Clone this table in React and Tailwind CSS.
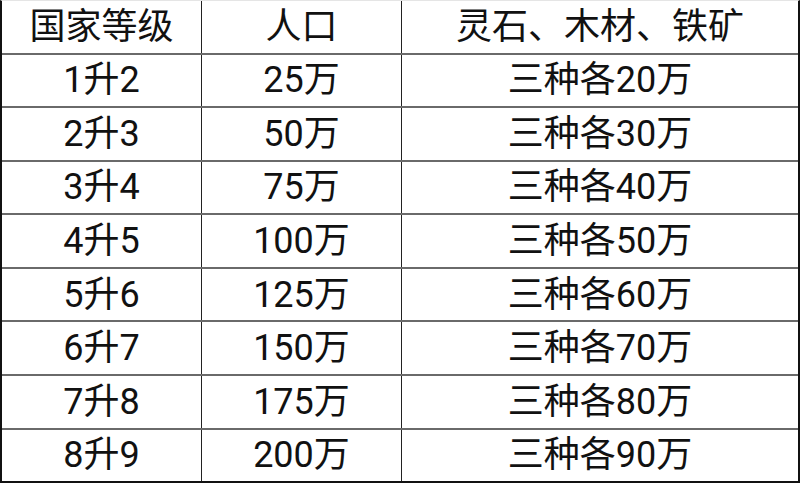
import React from "react";

const rows = [
  ["1升2", "25万", "三种各20万"],
  ["2升3", "50万", "三种各30万"],
  ["3升4", "75万", "三种各40万"],
  ["4升5", "100万", "三种各50万"],
  ["5升6", "125万", "三种各60万"],
  ["6升7", "150万", "三种各70万"],
  ["7升8", "175万", "三种各80万"],
  ["8升9", "200万", "三种各90万"],
];

function Row({ cells, first }) {
  return (
    <div
      className={
        "flex-1 flex " + (first ? "" : "border-t-2 border-[#6a6a6a]")
      }
    >
      <div className="w-[199px] flex items-center justify-center">{cells[0]}</div>
      <div className="w-[200px] border-l border-[#222] flex items-center justify-center">{cells[1]}</div>
      <div className="flex-1 border-l border-[#222] flex items-center justify-center">{cells[2]}</div>
    </div>
  );
}

export default function App() {
  return (
    <div
      className="w-[800px] h-[483px] bg-white flex flex-col border-l-2 border-r-2 border-b-2 border-t border-l-[#111] border-r-[#111] border-b-[#111] border-t-[#e5e5e5] text-[36px] leading-none text-[#111]"
      style={{ fontFamily: 'Roboto, "Noto Sans CJK SC", sans-serif' }}
    >
      <Row first cells={["国家等级", "人口", "灵石、木材、铁矿"]} />
      {rows.map((r, i) => (
        <Row key={i} cells={r} />
      ))}
    </div>
  );
}
